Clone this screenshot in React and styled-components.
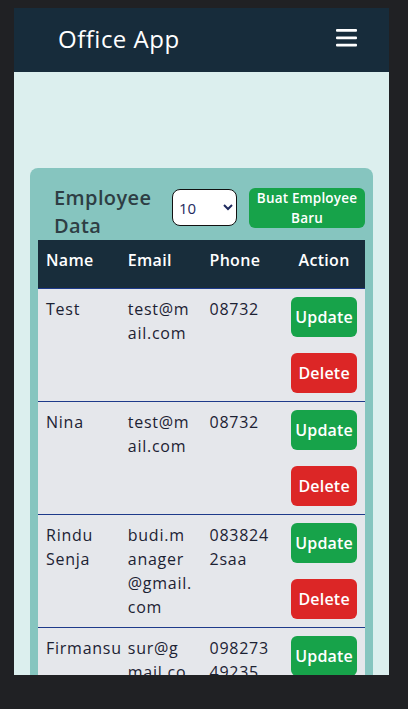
import React from "react";
import styled, { createGlobalStyle } from "styled-components";

const Global = createGlobalStyle`
  html, body { margin: 0; padding: 0; background: #202124; }
  body { font-family: "Open Sans", "Inter", sans-serif; }
  * { box-sizing: border-box; }
`;

const Screen = styled.div`
  padding: 8px 0 0 14px;
  min-height: 709px;
  background: #202124;
`;

const Frame = styled.div`
  width: 375px;
  height: 667px;
  overflow: hidden;
  background: #dcefee;
  display: flex;
  flex-direction: column;
`;

const NavBar = styled.header`
  flex: none;
  height: 64px;
  background: #172c3b;
  display: flex;
  align-items: center;
  justify-content: space-between;
  padding: 0 32px 0 44px;
`;

const Brand = styled.div`
  color: #ffffff;
  font-size: 24px;
  line-height: 32px;
  font-weight: 400;
  letter-spacing: 0.5px;
  margin-top: -2px;
`;

const MenuButton = styled.button`
  background: none;
  border: none;
  padding: 0;
  width: 21px;
  height: 18px;
  margin-top: -4px;
  display: flex;
  cursor: pointer;
`;

const Main = styled.main`
  padding: 96px 16px 0;
`;

const Card = styled.section`
  background: #86c5bf;
  border-radius: 8px;
  padding: 10px 8px 8px;
`;

const CardHeader = styled.div`
  display: flex;
  align-items: flex-start;
  gap: 12px;
`;

const Heading = styled.h2`
  flex: 1;
  margin: 0;
  padding: 6px 0 0 16px;
  font-size: 20px;
  line-height: 28px;
  font-weight: 600;
  letter-spacing: 0.4px;
  color: #2e3e44;
`;

const PageSelect = styled.select`
  flex: none;
  width: 65px;
  height: 37px;
  margin-top: 11px;
  border: 1px solid #111;
  border-radius: 8px;
  background: #fff;
  color: #1e2a5e;
  font-family: inherit;
  font-size: 15px;
  padding: 0 2px;
`;

const CreateButton = styled.button`
  flex: none;
  width: 116px;
  height: 40px;
  margin-top: 10px;
  border: none;
  border-radius: 6px;
  background: #17a34a;
  color: #fff;
  font-family: inherit;
  font-size: 13.5px;
  line-height: 20px;
  font-weight: 600;
  letter-spacing: 0.2px;
  padding: 0 2px;
`;

const Table = styled.table`
  width: 100%;
  border-collapse: collapse;
  table-layout: fixed;
`;

const Th = styled.th`
  background: #182d3b;
  color: #fff;
  font-size: 16px;
  line-height: 24px;
  font-weight: 600;
  letter-spacing: 0.3px;
  text-align: ${(p) => (p.$center ? "center" : "left")};
  vertical-align: top;
  padding: 8px 8px 16px;
  border-bottom: 1px solid #1e3a8a;
`;

const Td = styled.td`
  background: #e5e7eb;
  color: #1c2233;
  font-size: 16px;
  line-height: 24px;
  letter-spacing: 0.75px;
  vertical-align: top;
  padding: 8px;
  border-bottom: 1px solid #1e3a8a;
  word-break: ${(p) => (p.$breakAll ? "break-all" : "normal")};
`;

const ActionButton = styled.button`
  display: block;
  width: 100%;
  height: 40px;
  border: none;
  border-radius: 6px;
  background: ${(p) => (p.$danger ? "#dc2626" : "#17a34a")};
  color: #fff;
  font-family: inherit;
  font-size: 16px;
  font-weight: 600;
  letter-spacing: 0.2px;
  padding: 0;
  & + & {
    margin-top: 16px;
  }
`;

const employees = [
  { name: "Test", email: "test@mail.com", phone: "08732" },
  { name: "Nina", email: "test@mail.com", phone: "08732" },
  { name: "Rindu Senja", email: "budi.manager@gmail.com", phone: "0838242saa" },
  { name: "Firmansu", email: "sur@gmail.com", phone: "09827349235" },
];

function Hamburger() {
  return (
    <svg width="21" height="18" viewBox="0 0 21 18">
      <rect x="0" y="0" width="21" height="2.8" rx="1" fill="#fff" />
      <rect x="0" y="7.4" width="21" height="2.8" rx="1" fill="#fff" />
      <rect x="0" y="14.8" width="21" height="2.8" rx="1" fill="#fff" />
    </svg>
  );
}

export default function App() {
  return (
    <>
      <Global />
      <Screen>
        <Frame>
          <NavBar>
            <Brand>Office App</Brand>
            <MenuButton aria-label="menu">
              <Hamburger />
            </MenuButton>
          </NavBar>
          <Main>
            <Card>
              <CardHeader>
                <Heading>Employee Data</Heading>
                <PageSelect defaultValue="10">
                  <option value="10">10</option>
                  <option value="25">25</option>
                  <option value="50">50</option>
                </PageSelect>
                <CreateButton>Buat Employee Baru</CreateButton>
              </CardHeader>
              <Table>
                <thead>
                  <tr>
                    <Th>Name</Th>
                    <Th>Email</Th>
                    <Th>Phone</Th>
                    <Th $center>Action</Th>
                  </tr>
                </thead>
                <tbody>
                  {employees.map((e, i) => (
                    <tr key={i}>
                      <Td>{e.name}</Td>
                      <Td $breakAll>{e.email}</Td>
                      <Td $breakAll>{e.phone}</Td>
                      <Td>
                        <ActionButton>Update</ActionButton>
                        <ActionButton $danger>Delete</ActionButton>
                      </Td>
                    </tr>
                  ))}
                </tbody>
              </Table>
            </Card>
          </Main>
        </Frame>
      </Screen>
    </>
  );
}
